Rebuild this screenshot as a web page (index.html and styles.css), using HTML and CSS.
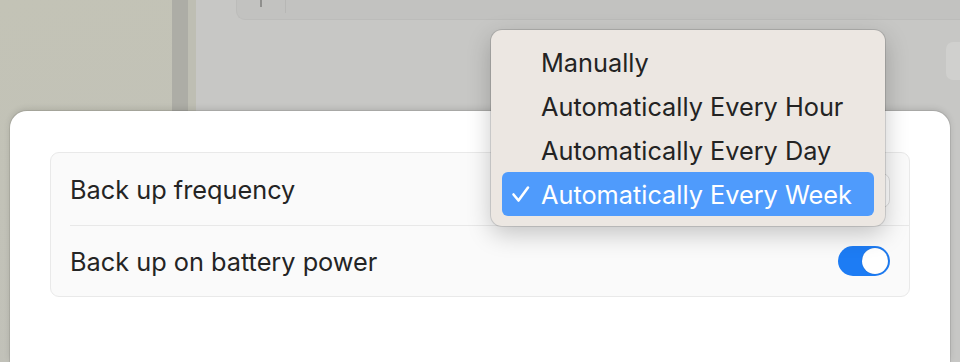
FILE: index.html
```html
<!DOCTYPE html>
<html lang="en">
<head>
    <meta charset="UTF-8">
    <meta name="viewport" content="width=device-width, initial-scale=1.0">
    <title>Time Machine Options</title>
    <link rel="stylesheet" href="styles.css">
</head>
<body>
    <div class="window">
        <div class="sidebar"></div>
        <div class="splitter"></div>
        <div class="splitter-edge"></div>
        <div class="content">
            <div class="toolbar">
                <span class="toolbar-mark"></span>
                <span class="toolbar-divider"></span>
            </div>
            <div class="side-button"></div>
        </div>
    </div>

    <div class="sheet">
        <div class="group">
            <div class="row">
                <span class="label">Back up frequency</span>
                <div class="popup"></div>
            </div>
            <div class="row">
                <span class="label">Back up on battery power</span>
                <div class="toggle on"><span class="knob"></span></div>
            </div>
        </div>
    </div>

    <div class="menu">
        <div class="item">Manually</div>
        <div class="item">Automatically Every Hour</div>
        <div class="item">Automatically Every Day</div>
        <div class="item selected">
            <svg class="check" width="20" height="18" viewBox="0 0 20 18">
                <path d="M2.5 9.5 L7.5 15.5 L17 2.5" fill="none" stroke="currentColor" stroke-width="2.6" stroke-linecap="round" stroke-linejoin="round"/>
            </svg>
            Automatically Every Week
        </div>
    </div>
</body>
</html>
```

FILE: styles.css
```css
* {
    margin: 0;
    padding: 0;
    box-sizing: border-box;
}

body {
    width: 960px;
    height: 362px;
    overflow: hidden;
    position: relative;
    font-family: Inter, 'Noto Sans', sans-serif;
    color: #242424;
}

/* background window, dimmed behind the sheet */
.window {
    display: flex;
    height: 100%;
}

.sidebar {
    width: 172px;
    background: linear-gradient(170deg, #c3c3b6 0%, #c1c1b9 100%);
}

.splitter {
    width: 16px;
    background: #adada6;
}

.splitter-edge {
    width: 8px;
    background: #bebeb3;
}

.content {
    flex: 1;
    background: #c7c7c5;
    padding-left: 40px;
    display: flex;
    align-items: flex-start;
}

.toolbar {
    flex: 1;
    height: 20px;
    background: #c2c2c0;
    border: 1px solid #bcbcba;
    border-top: none;
    border-right: none;
    border-radius: 0 0 0 9px;
    display: flex;
    padding-left: 23px;
    margin-right: -20px;
}

.toolbar-mark {
    width: 2px;
    height: 7px;
    background: #8f8f8d;
}

.toolbar-divider {
    width: 1px;
    height: 13px;
    background: #b7b7b5;
    margin-left: 23px;
}

.side-button {
    width: 20px;
    height: 38px;
    margin: 42px -6px 0 0;
    background: #d0d0ce;
    border-radius: 7px;
}

/* sheet */
.sheet {
    position: absolute;
    left: 10px;
    top: 111px;
    width: 940px;
    bottom: 0;
    background: #fff;
    border-radius: 17px 17px 0 0;
    box-shadow: 0 0 0 1px rgba(0, 0, 0, 0.08), 0 -2px 6px rgba(0, 0, 0, 0.12);
    padding: 41px 40px 0;
}

.group {
    background: #fafafa;
    border: 1px solid #e9e9e9;
    border-radius: 9px;
    padding-left: 19px;
}

.row {
    height: 72px;
    display: flex;
    align-items: center;
    justify-content: space-between;
    padding-right: 19px;
}

.row + .row {
    border-top: 1.5px solid #e8e8e8;
    height: 71px;
}

.label {
    font-size: 25.3px;
}

.popup {
    width: 300px;
    height: 35px;
    background: #fff;
    border: 1px solid #dedede;
    border-radius: 8px;
    margin-top: 2px;
}

.toggle {
    width: 52px;
    height: 30px;
    border-radius: 15px;
    background: #d9d9d9;
    padding: 2px;
    display: flex;
}

.toggle.on {
    background: #1d7cf4;
    justify-content: flex-end;
}

.knob {
    width: 26px;
    height: 26px;
    border-radius: 50%;
    background: #fff;
    box-shadow: 0 0 1px rgba(0, 0, 0, 0.3);
}

/* dropdown menu */
.menu {
    position: absolute;
    left: 491px;
    top: 30px;
    width: 394px;
    background: #ece7e2;
    border-radius: 11px;
    padding: 10px 11px;
    box-shadow: 0 0 0 1px rgba(0, 0, 0, 0.12), 0 8px 24px rgba(0, 0, 0, 0.22);
}

.item {
    height: 44px;
    display: flex;
    align-items: center;
    padding-left: 39px;
    font-size: 25.3px;
    color: #232323;
    position: relative;
}

.item.selected {
    background: #4f9bfc;
    color: #fff;
    border-radius: 6px;
}

.check {
    position: absolute;
    left: 9px;
    top: 13px;
}
```
